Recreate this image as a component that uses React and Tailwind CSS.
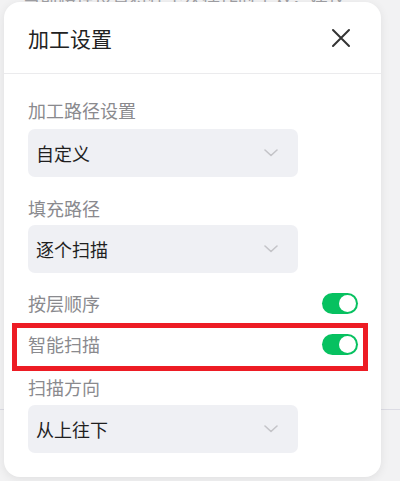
import React from "react";

const FONT = { fontFamily: '"Noto Sans CJK SC", "Noto Sans", sans-serif' };

function Chevron() {
  return (
    <svg width="14" height="8" viewBox="0 0 14 8" fill="none">
      <path d="M1 1l6 5.5L13 1" stroke="#c4c4c8" strokeWidth="1.6" strokeLinecap="round" strokeLinejoin="round" />
    </svg>
  );
}

function Select({ value }) {
  return (
    <div className="w-[270px] h-[48px] rounded-[7px] bg-[#eff0f4] flex items-center justify-between pl-[8px] pr-[20px]">
      <span className="text-[18px] leading-[24px] text-[#1f1f1f]">{value}</span>
      <Chevron />
    </div>
  );
}

function Toggle() {
  return (
    <div className="w-[36px] h-[21px] rounded-full bg-[#07c160] flex items-center justify-end pr-[2px]">
      <div className="w-[17px] h-[17px] rounded-full bg-white" />
    </div>
  );
}

export default function App() {
  return (
    <div className="relative w-[400px] h-[481px] overflow-hidden bg-[#f2f2f3]" style={FONT}>
      {/* background page */}
      <div className="absolute left-0 top-0 w-full h-full">
        <div className="mt-[-14px] ml-[22px] w-[324px] overflow-hidden text-[18px] leading-[22px] text-[#a0a0a4] whitespace-nowrap">
          当前路径设置将在下次操作时生效，建议保存
        </div>
        <div className="absolute left-0 top-[409px] w-full h-px bg-[#dcdce4]" />
      </div>

      {/* card */}
      <div className="absolute left-[4px] top-[2px] w-[377px] h-[475px] rounded-[16px] bg-white shadow-[0_2px_10px_rgba(0,0,0,0.08)] flex flex-col">
        <div className="h-[72px] flex items-center justify-between pl-[24px] pr-[30px] border-b border-[#ebebed]">
          <span className="text-[21px] leading-[28px] text-[#222]">加工设置</span>
          <svg width="20" height="20" viewBox="0 0 20 20" fill="none">
            <path d="M2 2l16 16M18 2L2 18" stroke="#333" strokeWidth="2" strokeLinecap="round" />
          </svg>
        </div>

        <div className="flex flex-col pl-[24px] pr-[23px] pt-[24px]">
          <div className="text-[18px] leading-[24px] text-[#8a8a8e]">加工路径设置</div>
          <div className="mt-[7px]"><Select value="自定义" /></div>

          <div className="mt-[19px] text-[18px] leading-[24px] text-[#8a8a8e]">填充路径</div>
          <div className="mt-[5px]"><Select value="逐个扫描" /></div>

          <div className="mt-[10px] h-[40px] flex items-center justify-between">
            <span className="text-[18px] leading-[24px] text-[#8a8a8e]">按层顺序</span>
            <Toggle />
          </div>
          <div className="mt-[1px] h-[40px] flex items-center justify-between">
            <span className="text-[18px] leading-[24px] text-[#8a8a8e]">智能扫描</span>
            <Toggle />
          </div>

          <div className="mt-[11px] text-[18px] leading-[24px] text-[#8a8a8e]">扫描方向</div>
          <div className="mt-[6px]"><Select value="从上往下" /></div>
        </div>
      </div>

      {/* annotation */}
      <div className="absolute left-[12px] top-[323px] w-[356px] h-[48px] border-[5px] border-[#ed1c24]" />
    </div>
  );
}
